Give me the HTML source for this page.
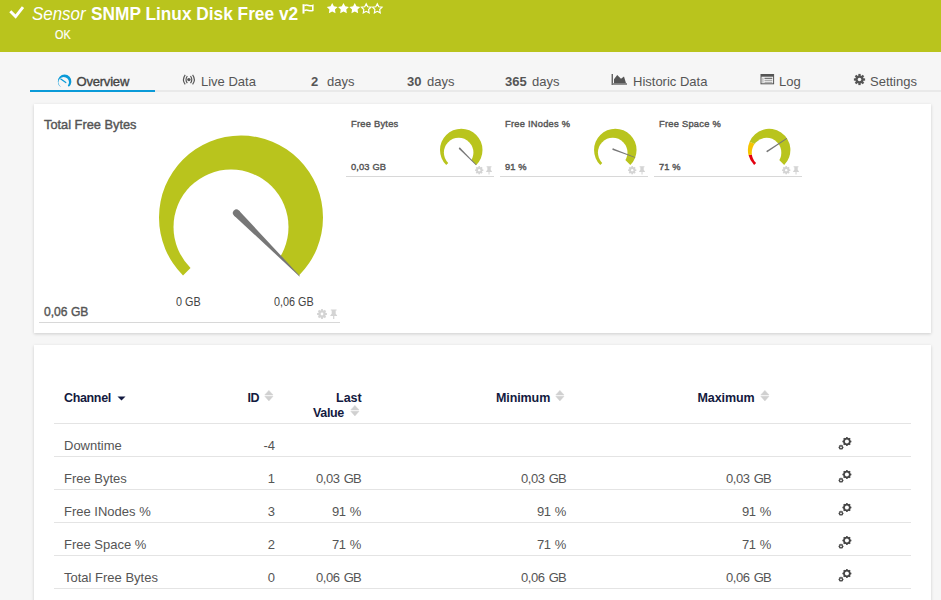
<!DOCTYPE html>
<html><head><meta charset="utf-8"><style>
*{box-sizing:border-box;margin:0;padding:0}
html,body{width:941px;height:600px;overflow:hidden;background:#f6f6f6;font-family:"Liberation Sans",sans-serif;position:relative}
.a{position:absolute;white-space:nowrap;line-height:1}
.w{color:#fff}
.tab{color:#555;font-size:13px}
.panel{position:absolute;background:#fff;box-shadow:0 1px 3px rgba(0,0,0,0.17)}
.gl{color:#555}
.sb{-webkit-text-stroke:0.4px #555}
.th{color:#131a40;font-size:12.5px;font-weight:bold;letter-spacing:-0.35px}
.td{color:#555;font-size:13px}
.tn{letter-spacing:-0.45px;word-spacing:1.1px}
.gb{letter-spacing:-0.9px}
.rl{position:absolute;left:54px;width:857px;height:1px;background:#e4e4e4}
</style></head><body>
<div class="a" style="left:0;top:0;width:941px;height:52px;background:#b9c41d"></div>
<svg class="a" style="left:5px;top:2px" width="24" height="20" viewBox="5 2 24 20"><path d="M10.3 11.3 L15.6 16.6 L23 7.2" fill="none" stroke="#fff" stroke-width="2.9" stroke-linejoin="miter"/></svg>
<div class="a w" style="left:32px;top:4.8px;font-size:18.5px;font-style:italic;transform:scaleX(0.915);transform-origin:0 0">Sensor</div>
<div class="a w" style="left:91px;top:4.8px;font-size:18.5px;font-weight:bold;transform:scaleX(0.934);transform-origin:0 0">SNMP Linux Disk Free v2</div>
<svg class="a" style="left:298px;top:0px" width="20" height="18" viewBox="298 0 20 18"><path d="M303.5 4.2 V13.6" stroke="#fff" stroke-width="2"/><path d="M304.3 5.4 Q306.5 4.6 308.6 5.4 Q310.8 6.2 312.8 5.4 V10.4 Q310.8 11.2 308.6 10.4 Q306.5 9.6 304.3 10.4" fill="none" stroke="#fff" stroke-width="1.6"/></svg>
<svg class="a" style="left:320px;top:0" width="70" height="18" viewBox="320 0 70 18"><polygon points="332.20,3.00 333.90,6.35 337.62,6.94 334.96,9.60 335.55,13.31 332.20,11.60 328.85,13.31 329.44,9.60 326.78,6.94 330.50,6.35" fill="#fff"/><polygon points="343.50,3.00 345.20,6.35 348.92,6.94 346.26,9.60 346.85,13.31 343.50,11.60 340.15,13.31 340.74,9.60 338.08,6.94 341.80,6.35" fill="#fff"/><polygon points="354.80,3.00 356.50,6.35 360.22,6.94 357.56,9.60 358.15,13.31 354.80,11.60 351.45,13.31 352.04,9.60 349.38,6.94 353.10,6.35" fill="#fff"/><polygon points="366.20,3.80 367.67,6.78 370.96,7.25 368.58,9.57 369.14,12.85 366.20,11.30 363.26,12.85 363.82,9.57 361.44,7.25 364.73,6.78" fill="none" stroke="#fff" stroke-width="1.15"/><polygon points="377.30,3.80 378.77,6.78 382.06,7.25 379.68,9.57 380.24,12.85 377.30,11.30 374.36,12.85 374.92,9.57 372.54,7.25 375.83,6.78" fill="none" stroke="#fff" stroke-width="1.15"/></svg>
<div class="a w" style="left:55px;top:28.6px;font-size:12px;transform:scaleX(0.9);transform-origin:0 0;-webkit-text-stroke:0.2px #fff">OK</div>
<div class="a" style="left:30px;top:90px;width:911px;height:2px;background:#e9e9e9"></div>
<div class="a" style="left:30px;top:90px;width:125px;height:2px;background:#0a9ad8"></div>
<svg class="a" style="left:50px;top:68px" width="26" height="22" viewBox="50 68 26 22"><path d="M64.6 81.4 L60.41 86.76 A6.8 6.8 0 1 1 68.79 86.76 Z" fill="#0a9ad8"/><circle cx="63.699999999999996" cy="82.2" r="5.3" fill="#f6f6f6"/><path d="M60.8 79 L65.8 82.6" stroke="#0a9ad8" stroke-width="1.2" stroke-linecap="round"/></svg>
<div class="a tab" style="left:76.5px;top:74.8px;color:#444;-webkit-text-stroke:0.35px #444;letter-spacing:-0.2px">Overview</div>
<svg class="a" style="left:176px;top:70px" width="24" height="20" viewBox="176 70 24 20"><circle cx="188.9" cy="79.6" r="1.7" fill="#555"/><path d="M187.3 76 Q184.7 79.6 187.3 83.2 M190.5 76 Q193.1 79.6 190.5 83.2 M185.2 74.8 Q181.7 79.6 185.2 84.4 M192.6 74.8 Q196.1 79.6 192.6 84.4" fill="none" stroke="#555" stroke-width="1.15"/></svg>
<div class="a tab" style="left:201px;top:75px">Live Data</div>
<div class="a tab" style="left:311px;top:75px"><b>2</b></div><div class="a tab" style="left:327px;top:75px">days</div>
<div class="a tab" style="left:407px;top:75px"><b>30</b></div><div class="a tab" style="left:427px;top:75px">days</div>
<div class="a tab" style="left:505px;top:75px"><b>365</b></div><div class="a tab" style="left:532px;top:75px">days</div>
<svg class="a" style="left:610px;top:72px" width="20" height="15" viewBox="610 72 20 15"><rect x="611.6" y="74" width="1.3" height="11" fill="#555"/><rect x="612" y="83.2" width="15" height="1.6" fill="#777"/><path d="M614 83.2 L614 79.2 L617.2 75 L621 78.8 L624 76.5 L626 83.2 Z" fill="#555"/></svg>
<div class="a tab" style="left:633px;top:75px">Historic Data</div>
<svg class="a" style="left:758px;top:72px" width="20" height="15" viewBox="758 72 20 15"><rect x="761" y="74.5" width="12.6" height="9.3" fill="none" stroke="#555" stroke-width="1"/><rect x="761" y="74.2" width="12.6" height="2.5" fill="#555"/><rect x="764.5" y="77.8" width="7.8" height="1" fill="#555"/><rect x="764.5" y="79.8" width="7.8" height="1" fill="#999"/><rect x="764.5" y="81.8" width="7.8" height="1" fill="#999"/><rect x="762.4" y="77.8" width="1" height="5" fill="#aaa"/></svg>
<div class="a tab" style="left:779px;top:75px">Log</div>
<svg class="a" style="left:853px;top:73px" width="13" height="13" viewBox="0 0 13 13"><circle cx="6.5" cy="6.5" r="4.1" fill="#555"/><rect x="5.35" y="0.9000000000000004" width="2.3" height="11.2" fill="#555" transform="rotate(0.0 6.5 6.5)"/><rect x="5.35" y="0.9000000000000004" width="2.3" height="11.2" fill="#555" transform="rotate(45.0 6.5 6.5)"/><rect x="5.35" y="0.9000000000000004" width="2.3" height="11.2" fill="#555" transform="rotate(90.0 6.5 6.5)"/><rect x="5.35" y="0.9000000000000004" width="2.3" height="11.2" fill="#555" transform="rotate(135.0 6.5 6.5)"/><circle cx="6.5" cy="6.5" r="1.8" fill="#f6f6f6"/></svg>
<div class="a tab" style="left:870px;top:75px">Settings</div>
<div class="panel" style="left:34px;top:104px;width:897px;height:229px"></div>
<div class="panel" style="left:34px;top:345px;width:897px;height:300px"></div>
<div class="a gl sb" style="left:44px;top:119.2px;font-size:12.8px">Total Free Bytes</div>
<div class="a gl sb" style="left:44.3px;top:305.8px;font-size:12.6px;transform:scaleX(0.96);transform-origin:0 0">0,06 GB</div>
<div class="a" style="left:176px;top:295.9px;font-size:12px;color:#444;transform:scaleX(0.9);transform-origin:0 0">0 GB</div>
<div class="a" style="left:273.6px;top:295.9px;font-size:12px;color:#444;transform:scaleX(0.9);transform-origin:0 0">0,06 GB</div>
<div class="a" style="left:39px;top:322px;width:301px;height:1px;background:#d8d8d8"></div>
<svg class="a" style="left:316.6px;top:309px" width="24" height="12" viewBox="0 0 24.00 12.00"><circle cx="5" cy="5" r="3.7" fill="#d4d4d4"/><rect x="4.0" y="0.09999999999999964" width="2.0" height="9.8" fill="#d4d4d4" transform="rotate(0.0 5 5)"/><rect x="4.0" y="0.09999999999999964" width="2.0" height="9.8" fill="#d4d4d4" transform="rotate(45.0 5 5)"/><rect x="4.0" y="0.09999999999999964" width="2.0" height="9.8" fill="#d4d4d4" transform="rotate(90.0 5 5)"/><rect x="4.0" y="0.09999999999999964" width="2.0" height="9.8" fill="#d4d4d4" transform="rotate(135.0 5 5)"/><circle cx="5" cy="5" r="1.4" fill="#fff"/><path d="M13.8 0.4 H19.6 V1.6 H18.7 V4.8 L20.1 6.4 V7.1 H17.3 V10 H16.1 V7.1 H13.3 V6.4 L14.7 4.8 V1.6 H13.8 Z" fill="#d4d4d4"/></svg>
<div class="a gl sb" style="left:351px;top:120px;font-size:9.3px;letter-spacing:0.25px">Free Bytes</div>
<div class="a gl sb" style="left:351px;top:162.9px;font-size:9.3px;letter-spacing:0.15px">0,03 GB</div>
<div class="a" style="left:346px;top:176px;width:148px;height:1px;background:#d8d8d8"></div>
<svg class="a" style="left:474.5px;top:165.8px" width="24" height="12" viewBox="0 0 28.57 14.29"><circle cx="5" cy="5" r="3.7" fill="#d4d4d4"/><rect x="4.0" y="0.09999999999999964" width="2.0" height="9.8" fill="#d4d4d4" transform="rotate(0.0 5 5)"/><rect x="4.0" y="0.09999999999999964" width="2.0" height="9.8" fill="#d4d4d4" transform="rotate(45.0 5 5)"/><rect x="4.0" y="0.09999999999999964" width="2.0" height="9.8" fill="#d4d4d4" transform="rotate(90.0 5 5)"/><rect x="4.0" y="0.09999999999999964" width="2.0" height="9.8" fill="#d4d4d4" transform="rotate(135.0 5 5)"/><circle cx="5" cy="5" r="1.4" fill="#fff"/><path d="M13.8 0.4 H19.6 V1.6 H18.7 V4.8 L20.1 6.4 V7.1 H17.3 V10 H16.1 V7.1 H13.3 V6.4 L14.7 4.8 V1.6 H13.8 Z" fill="#d4d4d4"/></svg>
<div class="a gl sb" style="left:505px;top:120px;font-size:9.3px;letter-spacing:0.25px">Free INodes %</div>
<div class="a gl sb" style="left:505px;top:162.9px;font-size:9.3px;letter-spacing:0.15px">91 %</div>
<div class="a" style="left:500px;top:176px;width:148px;height:1px;background:#d8d8d8"></div>
<svg class="a" style="left:627.5px;top:165.8px" width="24" height="12" viewBox="0 0 28.57 14.29"><circle cx="5" cy="5" r="3.7" fill="#d4d4d4"/><rect x="4.0" y="0.09999999999999964" width="2.0" height="9.8" fill="#d4d4d4" transform="rotate(0.0 5 5)"/><rect x="4.0" y="0.09999999999999964" width="2.0" height="9.8" fill="#d4d4d4" transform="rotate(45.0 5 5)"/><rect x="4.0" y="0.09999999999999964" width="2.0" height="9.8" fill="#d4d4d4" transform="rotate(90.0 5 5)"/><rect x="4.0" y="0.09999999999999964" width="2.0" height="9.8" fill="#d4d4d4" transform="rotate(135.0 5 5)"/><circle cx="5" cy="5" r="1.4" fill="#fff"/><path d="M13.8 0.4 H19.6 V1.6 H18.7 V4.8 L20.1 6.4 V7.1 H17.3 V10 H16.1 V7.1 H13.3 V6.4 L14.7 4.8 V1.6 H13.8 Z" fill="#d4d4d4"/></svg>
<div class="a gl sb" style="left:659px;top:120px;font-size:9.3px;letter-spacing:0.25px">Free Space %</div>
<div class="a gl sb" style="left:659px;top:162.9px;font-size:9.3px;letter-spacing:0.15px">71 %</div>
<div class="a" style="left:654px;top:176px;width:148px;height:1px;background:#d8d8d8"></div>
<svg class="a" style="left:781.5px;top:165.8px" width="24" height="12" viewBox="0 0 28.57 14.29"><circle cx="5" cy="5" r="3.7" fill="#d4d4d4"/><rect x="4.0" y="0.09999999999999964" width="2.0" height="9.8" fill="#d4d4d4" transform="rotate(0.0 5 5)"/><rect x="4.0" y="0.09999999999999964" width="2.0" height="9.8" fill="#d4d4d4" transform="rotate(45.0 5 5)"/><rect x="4.0" y="0.09999999999999964" width="2.0" height="9.8" fill="#d4d4d4" transform="rotate(90.0 5 5)"/><rect x="4.0" y="0.09999999999999964" width="2.0" height="9.8" fill="#d4d4d4" transform="rotate(135.0 5 5)"/><circle cx="5" cy="5" r="1.4" fill="#fff"/><path d="M13.8 0.4 H19.6 V1.6 H18.7 V4.8 L20.1 6.4 V7.1 H17.3 V10 H16.1 V7.1 H13.3 V6.4 L14.7 4.8 V1.6 H13.8 Z" fill="#d4d4d4"/></svg>
<svg class="a" style="left:0;top:0" width="941" height="600" viewBox="0 0 941 600"><g transform="translate(241 217.5) scale(1)"><path d="M0 0 L-57.98 57.98 A82 82 0 1 1 57.98 57.98 Z" fill="#b9c41d"/><circle cx="-10" cy="9.5" r="57.5" fill="#fff"/><g transform="rotate(405.00)"><path d="M-6.5 -3.5 L83 -0.3 L83 0.3 L-6.5 3.5 Z" fill="#777"/><circle cx="-6.5" cy="0" r="3.5" fill="#777"/></g></g><g transform="translate(461.25 150) scale(0.25914634146341464)"><path d="M0 0 L-57.98 57.98 A82 82 0 1 1 57.98 57.98 Z" fill="#b9c41d"/><circle cx="-10" cy="10" r="57" fill="#fff"/><g transform="rotate(405.00)"><path d="M-9 -3.0 L82 -1.5 L82 1.5 L-9 3.0 Z" fill="#777"/><circle cx="-9" cy="0" r="3.0" fill="#777"/></g></g><g transform="translate(615.3 150) scale(0.25914634146341464)"><path d="M0 0 L-57.98 57.98 A82 82 0 1 1 57.98 57.98 Z" fill="#b9c41d"/><circle cx="-10" cy="10" r="57" fill="#fff"/><g transform="rotate(380.70)"><path d="M-9 -3.0 L82 -1.5 L82 1.5 L-9 3.0 Z" fill="#777"/><circle cx="-9" cy="0" r="3.0" fill="#777"/></g></g><g transform="translate(769.15 150.05) scale(0.25914634146341464)"><path d="M0 0 L-57.98 57.98 A82 82 0 0 1 -79.39 20.52 Z" fill="#e3000f"/><path d="M0 0 L-79.39 20.52 A82 82 0 0 1 -75.31 -32.45 Z" fill="#f5c400"/><path d="M0 0 L-75.31 -32.45 A82 82 0 1 1 57.98 57.98 Z" fill="#b9c41d"/><circle cx="-10" cy="10" r="57" fill="#fff"/><g transform="rotate(326.70)"><path d="M-9 -3.0 L82 -1.5 L82 1.5 L-9 3.0 Z" fill="#777"/><circle cx="-9" cy="0" r="3.0" fill="#777"/></g></g></svg>
<div class="a th" style="left:64px;top:391.8px">Channel</div>
<svg class="a" style="left:117px;top:396px" width="9" height="5" viewBox="0 0 9 5"><path d="M0.5 0.5 L8.5 0.5 L4.5 4.5 Z" fill="#131a40"/></svg>
<div class="a th" style="left:247.5px;top:391.8px">ID</div><svg class="a" style="left:264.3px;top:389.8px" width="10" height="12" viewBox="0 0 10 12"><path d="M0.8 4.9 L4.9 0.4 L9 4.9 Z M0.8 6.3 L4.9 10.9 L9 6.3 Z" fill="#d0d0d0" stroke="#d0d0d0" stroke-width="0.5" stroke-linejoin="round"/></svg>
<div class="a th" style="left:336px;top:391.8px;letter-spacing:0">Last</div>
<div class="a th" style="left:313px;top:406.7px">Value</div><svg class="a" style="left:350.3px;top:404.8px" width="10" height="12" viewBox="0 0 10 12"><path d="M0.8 4.9 L4.9 0.4 L9 4.9 Z M0.8 6.3 L4.9 10.9 L9 6.3 Z" fill="#d0d0d0" stroke="#d0d0d0" stroke-width="0.5" stroke-linejoin="round"/></svg>
<div class="a th" style="left:496px;top:391.8px;letter-spacing:-0.1px">Minimum</div><svg class="a" style="left:555.3px;top:389.8px" width="10" height="12" viewBox="0 0 10 12"><path d="M0.8 4.9 L4.9 0.4 L9 4.9 Z M0.8 6.3 L4.9 10.9 L9 6.3 Z" fill="#d0d0d0" stroke="#d0d0d0" stroke-width="0.5" stroke-linejoin="round"/></svg>
<div class="a th" style="left:697.5px;top:391.8px;letter-spacing:-0.1px">Maximum</div><svg class="a" style="left:760.3px;top:389.8px" width="10" height="12" viewBox="0 0 10 12"><path d="M0.8 4.9 L4.9 0.4 L9 4.9 Z M0.8 6.3 L4.9 10.9 L9 6.3 Z" fill="#d0d0d0" stroke="#d0d0d0" stroke-width="0.5" stroke-linejoin="round"/></svg>
<div class="rl" style="top:423px"></div>
<div class="rl" style="top:456px"></div>
<div class="rl" style="top:489px"></div>
<div class="rl" style="top:522px"></div>
<div class="rl" style="top:555px"></div>
<div class="rl" style="top:588px"></div>
<div class="a td" style="left:64px;top:439.2px">Downtime</div><div class="a td" style="right:666px;top:439.2px">-4</div><svg class="a" style="left:838px;top:436px" width="16" height="14" viewBox="0 0 16 14"><circle cx="8.9" cy="5.5" r="3.8" fill="#444"/><rect x="8.15" y="1.0" width="1.5" height="9.0" fill="#444" transform="rotate(0.0 8.9 5.5)"/><rect x="8.15" y="1.0" width="1.5" height="9.0" fill="#444" transform="rotate(45.0 8.9 5.5)"/><rect x="8.15" y="1.0" width="1.5" height="9.0" fill="#444" transform="rotate(90.0 8.9 5.5)"/><rect x="8.15" y="1.0" width="1.5" height="9.0" fill="#444" transform="rotate(135.0 8.9 5.5)"/><circle cx="8.9" cy="5.5" r="2.0" fill="#fff"/><circle cx="3.0" cy="11.3" r="2.0" fill="#444"/><rect x="2.55" y="8.700000000000001" width="0.9" height="5.2" fill="#444" transform="rotate(0.0 3.0 11.3)"/><rect x="2.55" y="8.700000000000001" width="0.9" height="5.2" fill="#444" transform="rotate(45.0 3.0 11.3)"/><rect x="2.55" y="8.700000000000001" width="0.9" height="5.2" fill="#444" transform="rotate(90.0 3.0 11.3)"/><rect x="2.55" y="8.700000000000001" width="0.9" height="5.2" fill="#444" transform="rotate(135.0 3.0 11.3)"/><circle cx="3.0" cy="11.3" r="0.9" fill="#fff"/></svg>
<div class="a td" style="left:64px;top:472.2px">Free Bytes</div><div class="a td" style="right:666px;top:472.2px">1</div><div class="a td tn" style="right:580.2px;top:472.2px">0,03 <span class="gb">GB</span></div><div class="a td tn" style="right:375.20000000000005px;top:472.2px">0,03 <span class="gb">GB</span></div><div class="a td tn" style="right:170.20000000000005px;top:472.2px">0,03 <span class="gb">GB</span></div><svg class="a" style="left:838px;top:469px" width="16" height="14" viewBox="0 0 16 14"><circle cx="8.9" cy="5.5" r="3.8" fill="#444"/><rect x="8.15" y="1.0" width="1.5" height="9.0" fill="#444" transform="rotate(0.0 8.9 5.5)"/><rect x="8.15" y="1.0" width="1.5" height="9.0" fill="#444" transform="rotate(45.0 8.9 5.5)"/><rect x="8.15" y="1.0" width="1.5" height="9.0" fill="#444" transform="rotate(90.0 8.9 5.5)"/><rect x="8.15" y="1.0" width="1.5" height="9.0" fill="#444" transform="rotate(135.0 8.9 5.5)"/><circle cx="8.9" cy="5.5" r="2.0" fill="#fff"/><circle cx="3.0" cy="11.3" r="2.0" fill="#444"/><rect x="2.55" y="8.700000000000001" width="0.9" height="5.2" fill="#444" transform="rotate(0.0 3.0 11.3)"/><rect x="2.55" y="8.700000000000001" width="0.9" height="5.2" fill="#444" transform="rotate(45.0 3.0 11.3)"/><rect x="2.55" y="8.700000000000001" width="0.9" height="5.2" fill="#444" transform="rotate(90.0 3.0 11.3)"/><rect x="2.55" y="8.700000000000001" width="0.9" height="5.2" fill="#444" transform="rotate(135.0 3.0 11.3)"/><circle cx="3.0" cy="11.3" r="0.9" fill="#fff"/></svg>
<div class="a td" style="left:64px;top:505.2px">Free INodes %</div><div class="a td" style="right:666px;top:505.2px">3</div><div class="a td tn" style="right:580.2px;top:505.2px">91 %</div><div class="a td tn" style="right:375.20000000000005px;top:505.2px">91 %</div><div class="a td tn" style="right:170.20000000000005px;top:505.2px">91 %</div><svg class="a" style="left:838px;top:502px" width="16" height="14" viewBox="0 0 16 14"><circle cx="8.9" cy="5.5" r="3.8" fill="#444"/><rect x="8.15" y="1.0" width="1.5" height="9.0" fill="#444" transform="rotate(0.0 8.9 5.5)"/><rect x="8.15" y="1.0" width="1.5" height="9.0" fill="#444" transform="rotate(45.0 8.9 5.5)"/><rect x="8.15" y="1.0" width="1.5" height="9.0" fill="#444" transform="rotate(90.0 8.9 5.5)"/><rect x="8.15" y="1.0" width="1.5" height="9.0" fill="#444" transform="rotate(135.0 8.9 5.5)"/><circle cx="8.9" cy="5.5" r="2.0" fill="#fff"/><circle cx="3.0" cy="11.3" r="2.0" fill="#444"/><rect x="2.55" y="8.700000000000001" width="0.9" height="5.2" fill="#444" transform="rotate(0.0 3.0 11.3)"/><rect x="2.55" y="8.700000000000001" width="0.9" height="5.2" fill="#444" transform="rotate(45.0 3.0 11.3)"/><rect x="2.55" y="8.700000000000001" width="0.9" height="5.2" fill="#444" transform="rotate(90.0 3.0 11.3)"/><rect x="2.55" y="8.700000000000001" width="0.9" height="5.2" fill="#444" transform="rotate(135.0 3.0 11.3)"/><circle cx="3.0" cy="11.3" r="0.9" fill="#fff"/></svg>
<div class="a td" style="left:64px;top:538.2px">Free Space %</div><div class="a td" style="right:666px;top:538.2px">2</div><div class="a td tn" style="right:580.2px;top:538.2px">71 %</div><div class="a td tn" style="right:375.20000000000005px;top:538.2px">71 %</div><div class="a td tn" style="right:170.20000000000005px;top:538.2px">71 %</div><svg class="a" style="left:838px;top:535px" width="16" height="14" viewBox="0 0 16 14"><circle cx="8.9" cy="5.5" r="3.8" fill="#444"/><rect x="8.15" y="1.0" width="1.5" height="9.0" fill="#444" transform="rotate(0.0 8.9 5.5)"/><rect x="8.15" y="1.0" width="1.5" height="9.0" fill="#444" transform="rotate(45.0 8.9 5.5)"/><rect x="8.15" y="1.0" width="1.5" height="9.0" fill="#444" transform="rotate(90.0 8.9 5.5)"/><rect x="8.15" y="1.0" width="1.5" height="9.0" fill="#444" transform="rotate(135.0 8.9 5.5)"/><circle cx="8.9" cy="5.5" r="2.0" fill="#fff"/><circle cx="3.0" cy="11.3" r="2.0" fill="#444"/><rect x="2.55" y="8.700000000000001" width="0.9" height="5.2" fill="#444" transform="rotate(0.0 3.0 11.3)"/><rect x="2.55" y="8.700000000000001" width="0.9" height="5.2" fill="#444" transform="rotate(45.0 3.0 11.3)"/><rect x="2.55" y="8.700000000000001" width="0.9" height="5.2" fill="#444" transform="rotate(90.0 3.0 11.3)"/><rect x="2.55" y="8.700000000000001" width="0.9" height="5.2" fill="#444" transform="rotate(135.0 3.0 11.3)"/><circle cx="3.0" cy="11.3" r="0.9" fill="#fff"/></svg>
<div class="a td" style="left:64px;top:571.2px">Total Free Bytes</div><div class="a td" style="right:666px;top:571.2px">0</div><div class="a td tn" style="right:580.2px;top:571.2px">0,06 <span class="gb">GB</span></div><div class="a td tn" style="right:375.20000000000005px;top:571.2px">0,06 <span class="gb">GB</span></div><div class="a td tn" style="right:170.20000000000005px;top:571.2px">0,06 <span class="gb">GB</span></div><svg class="a" style="left:838px;top:568px" width="16" height="14" viewBox="0 0 16 14"><circle cx="8.9" cy="5.5" r="3.8" fill="#444"/><rect x="8.15" y="1.0" width="1.5" height="9.0" fill="#444" transform="rotate(0.0 8.9 5.5)"/><rect x="8.15" y="1.0" width="1.5" height="9.0" fill="#444" transform="rotate(45.0 8.9 5.5)"/><rect x="8.15" y="1.0" width="1.5" height="9.0" fill="#444" transform="rotate(90.0 8.9 5.5)"/><rect x="8.15" y="1.0" width="1.5" height="9.0" fill="#444" transform="rotate(135.0 8.9 5.5)"/><circle cx="8.9" cy="5.5" r="2.0" fill="#fff"/><circle cx="3.0" cy="11.3" r="2.0" fill="#444"/><rect x="2.55" y="8.700000000000001" width="0.9" height="5.2" fill="#444" transform="rotate(0.0 3.0 11.3)"/><rect x="2.55" y="8.700000000000001" width="0.9" height="5.2" fill="#444" transform="rotate(45.0 3.0 11.3)"/><rect x="2.55" y="8.700000000000001" width="0.9" height="5.2" fill="#444" transform="rotate(90.0 3.0 11.3)"/><rect x="2.55" y="8.700000000000001" width="0.9" height="5.2" fill="#444" transform="rotate(135.0 3.0 11.3)"/><circle cx="3.0" cy="11.3" r="0.9" fill="#fff"/></svg>
</body></html>
